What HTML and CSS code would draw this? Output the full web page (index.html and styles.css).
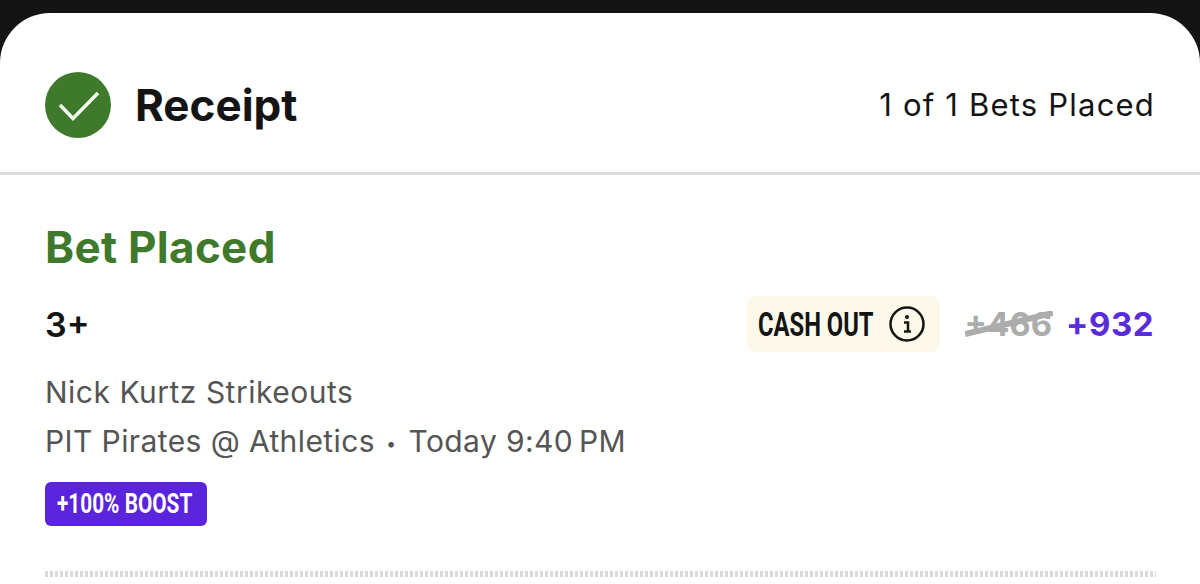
FILE: index.html
```html
<!DOCTYPE html>
<html lang="en">
<head>
  <meta charset="UTF-8">
  <title>Receipt</title>
  <link rel="stylesheet" href="styles.css">
</head>
<body>
<div class="card">
  <div class="header">
    <div class="header-left">
      <svg class="check" viewBox="0 0 66 66" width="66" height="66">
        <circle cx="33" cy="33" r="33" fill="#3f7a2c"/>
        <path d="M15 33 L28 46.5 L53 21" fill="none" stroke="#f4f8f0" stroke-width="3.5"/>
      </svg>
      <h1>Receipt</h1>
    </div>
    <div class="placed-count">1 of 1 Bets Placed</div>
  </div>

  <div class="bet">
    <h2>Bet Placed</h2>
    <div class="bet-row">
      <div class="pick">3+</div>
      <div class="bet-right">
        <div class="cash-out">
          <span class="cash-label">CASH OUT</span>
          <svg viewBox="0 0 36 36" width="36" height="36">
            <circle cx="18" cy="18" r="16.5" fill="none" stroke="#141414" stroke-width="2.5"/>
            <circle cx="18" cy="11" r="2" fill="#141414"/>
            <path d="M15 16.5 H19 V25.5 M15 25.5 H22" fill="none" stroke="#141414" stroke-width="2.5"/>
          </svg>
        </div>
        <span class="odds-old">+466<svg class="strike" viewBox="0 0 88 26" width="88" height="26"><path d="M0 23 L88 2" stroke="#acacac" stroke-width="6"/></svg></span>
        <span class="odds-new">+932</span>
      </div>
    </div>
    <div class="market">Nick Kurtz Strikeouts</div>
    <div class="game">PIT Pirates @ Athletics<span class="sep">•</span>Today 9:40&#8201;PM</div>
    <div class="boost"><span class="boost-label">+100% BOOST</span></div>
    <div class="dots"></div>
  </div>
</div>
</body>
</html>
```

FILE: styles.css
```css
html, body {
  margin: 0;
  height: 584px;
  overflow: hidden;
}
body {
  background-color: #141414;
  padding-top: 13px;
  box-sizing: border-box;
  font-family: Inter, "Liberation Sans", sans-serif;
  color: #141414;
}
.card {
  background-color: #fff;
  border-radius: 50px 50px 0 0;
  height: 571px;
}
.header {
  display: flex;
  justify-content: space-between;
  align-items: center;
  height: 135px;
  padding: 24px 45px 0 45px;
  border-bottom: 3px solid #dcdcdc;
}
.header-left {
  display: flex;
  align-items: center;
  gap: 24px;
}
h1 {
  margin: 0;
  font-size: 44px;
  font-weight: 700;
}
.placed-count {
  font-size: 31px;
  letter-spacing: 1.2px;
}
.bet {
  padding: 48px 44px 0 45px;
}
h2 {
  margin: 0;
  font-size: 44px;
  line-height: 48px;
  font-weight: 700;
  letter-spacing: 0.3px;
  color: #3f7a2c;
}
.bet-row {
  display: flex;
  justify-content: space-between;
  align-items: center;
  height: 56px;
  margin-top: 25px;
}
.pick {
  font-size: 34px;
  font-weight: 600;
}
.bet-right {
  display: flex;
  align-items: center;
  padding-right: 2px;
}
.cash-out {
  display: flex;
  align-items: center;
  gap: 16px;
  height: 56px;
  padding: 0 15px 0 11px;
  margin-right: 25px;
  border-radius: 9px;
  background-color: #fdf9ea;
}
.cash-label {
  display: block;
  width: 115px;
  font-family: Roboto, sans-serif;
  font-size: 33px;
  font-weight: 700;
  white-space: nowrap;
  transform: scaleX(0.72);
  transform-origin: left center;
}
.odds-old {
  position: relative;
  font-size: 33px;
  font-weight: 700;
  color: #acacac;
  margin-right: 14px;
}
.strike {
  position: absolute;
  left: 0;
  top: 7px;
}
.odds-new {
  font-size: 33px;
  font-weight: 700;
  letter-spacing: 0.5px;
  color: #5a2bd8;
}
.market {
  margin-top: 16px;
  font-size: 30px;
  line-height: 49px;
  color: #555;
  letter-spacing: 0.5px;
}
.game {
  font-size: 30px;
  line-height: 49px;
  color: #555;
  letter-spacing: 0.4px;
}
.sep {
  margin: 0 12px 0 11px;
  font-size: 18px;
  vertical-align: 2px;
}
.boost {
  display: block;
  width: 162px;
  box-sizing: border-box;
  margin-top: 14px;
  padding: 0 12px;
  height: 44px;
  line-height: 44px;
  border-radius: 6px;
  background-color: #5a24dc;
  color: #fff;
}
.boost-label {
  display: block;
  width: 138px;
  font-family: Roboto, sans-serif;
  font-size: 27px;
  font-weight: 700;
  white-space: nowrap;
  transform: scaleX(0.77);
  transform-origin: left center;
}
.dots {
  margin-top: 45px;
  height: 6px;
  background-image: repeating-linear-gradient(90deg, #d9d9d9 0 3px, #fff 3px 5px);
}
```
